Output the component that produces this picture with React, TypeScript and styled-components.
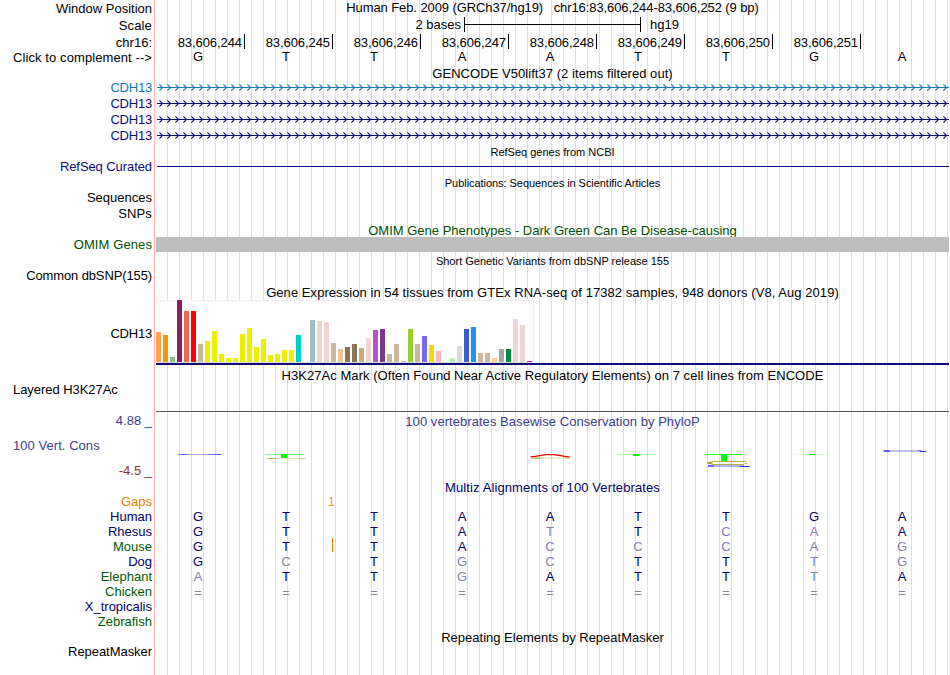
import styled, { createGlobalStyle } from "styled-components";

const BASES = ["G", "T", "T", "A", "A", "T", "T", "G", "A"];

const POSITIONS = [244, 245, 246, 247, 248, 249, 250, 251];

const GENES = [
  { id: 1, color: "#0c78b4" },
  { id: 2, color: "#0c0c78" },
  { id: 3, color: "#0c0c78" },
  { id: 4, color: "#0c0c78" },
];

const YELLOW = "#eeee00";
const TAN = "#cdb79e";
const PINK = "#eed5d2";

// [height, color] per tissue
const TISSUES: [number, string][] = [
  [30, "#ffa54f"],
  [27, "#ee9a00"],
  [5, "#8fbc8f"],
  [62, "#8b1c62"],
  [51, "#ee6a50"],
  [51, "#ff0000"],
  [18, TAN],
  [21, YELLOW],
  [31, YELLOW],
  [8, YELLOW],
  [4, YELLOW],
  [4, YELLOW],
  [28, YELLOW],
  [34, YELLOW],
  [15, YELLOW],
  [23, YELLOW],
  [7, YELLOW],
  [8, YELLOW],
  [12, YELLOW],
  [12, YELLOW],
  [27, "#00cdcd"],
  [0, "#ee82ee"],
  [42, "#9ac0cd"],
  [41, PINK],
  [40, PINK],
  [19, TAN],
  [13, "#eec591"],
  [15, "#8b7355"],
  [18, "#8b7355"],
  [14, "#cdaa7d"],
  [24, PINK],
  [32, "#b452cd"],
  [33, "#7a378b"],
  [8, TAN],
  [18, TAN],
  [1, TAN],
  [33, "#9acd32"],
  [18, TAN],
  [26, "#7a67ee"],
  [17, "#ffd700"],
  [11, "#ffb6c1"],
  [0, "#cd9b1d"],
  [4, "#b4eeb4"],
  [16, "#d9d9d9"],
  [33, "#3a5fcd"],
  [35, "#1e90ff"],
  [9, TAN],
  [9, TAN],
  [4, "#ffd39b"],
  [13, "#a6a6a6"],
  [13, "#008b45"],
  [43, PINK],
  [37, PINK],
  [1, "#ff00ff"],
];

const NAVY = "#000064";
const GREEN = "#005a00";

const SPECIES = [
  { name: "Human", color: NAVY, seq: "GTTAATTGA" },
  { name: "Rhesus", color: NAVY, seq: "GTTATTCAA" },
  { name: "Mouse", color: GREEN, seq: "GTTACCCAG", insert: true },
  { name: "Dog", color: NAVY, seq: "GCTGCTTTG" },
  { name: "Elephant", color: GREEN, seq: "ATTGATTTA" },
  { name: "Chicken", color: GREEN, seq: "=========" },
  { name: "X_tropicalis", color: NAVY, seq: "" },
  { name: "Zebrafish", color: GREEN, seq: "" },
];

const GeneLine = ({ id, color }: { id: number; color: string }) => (
  <TrackSvg width="794" height="16" viewBox="0 0 794 16">
    <defs>
      <pattern id={`strand${id}`} x="4" y="0" width="8" height="16" patternUnits="userSpaceOnUse">
        <path d="M0.4 4.4 L3.5 7.5 L0.4 10.6" fill="none" stroke={color} strokeWidth="1.15" />
      </pattern>
    </defs>
    <rect x="2" y="7" width="792" height="1" fill={color} />
    <rect x="3" y="0" width="791" height="16" fill={`url(#strand${id})`} />
  </TrackSvg>
);

const PhyloP = () => (
  <TrackSvg width="794" height="68" viewBox="155 412 794 68">
    <defs>
      <linearGradient id="blueFade">
        <stop offset="0" stopColor="#0000ff" stopOpacity="0.4" />
        <stop offset="0.12" stopColor="#0000ff" stopOpacity="0.75" />
        <stop offset="0.3" stopColor="#0000ff" stopOpacity="0.3" />
        <stop offset="0.55" stopColor="#0000ff" stopOpacity="0.3" />
        <stop offset="1" stopColor="#0000ff" stopOpacity="0.75" />
      </linearGradient>
      <linearGradient id="oliveFade">
        <stop offset="0" stopColor="#a09600" stopOpacity="0.5" />
        <stop offset="0.14" stopColor="#a09600" stopOpacity="0.8" />
        <stop offset="0.35" stopColor="#a09600" stopOpacity="0.25" />
        <stop offset="0.75" stopColor="#a09600" stopOpacity="0.25" />
        <stop offset="0.9" stopColor="#a09600" stopOpacity="0.6" />
        <stop offset="1" stopColor="#a09600" stopOpacity="0.2" />
      </linearGradient>
    </defs>

    <rect x="178" y="454" width="43" height="1" fill="url(#blueFade)" />

    <rect x="265" y="454" width="38" height="1" fill="#00ff00" opacity="0.5" />
    <rect x="281" y="454" width="6" height="4" fill="#00ff00" />
    <rect x="267" y="458" width="39" height="1" fill="url(#oliveFade)" />

    <path
      d="M530.5 456.8 L535 456.4 L546 454.6 L554 454.6 L565 456.4 L569.5 456.8"
      fill="none"
      stroke="#ff0000"
      strokeWidth="1.2"
    />
    <rect x="531" y="457.3" width="40" height="1.4" fill="url(#oliveFade)" />

    <rect x="617" y="454" width="38" height="1" fill="#00ff00" opacity="0.3" />
    <rect x="633" y="454" width="6" height="2" fill="#00ff00" />

    <rect x="705" y="454" width="38" height="1" fill="#00ff00" opacity="0.8" />
    <rect x="721" y="454" width="6" height="7" fill="#00ff00" />
    <path
      d="M746 461.7 L743 461.5 L713 461.5 L708 463 L713 464.5 L744 464.5 L745 463.3 L747 463.3"
      fill="none"
      stroke="#a09600"
      strokeWidth="1"
      opacity="0.75"
    />
    <rect x="707.5" y="462" width="5" height="2" fill="#a09600" opacity="0.7" />
    <rect x="708" y="465" width="36" height="2" fill="#0000ff" opacity="0.3" />
    <rect x="708" y="465" width="6" height="2" fill="#0000ff" opacity="0.4" />
    <rect x="740" y="466" width="10" height="1" fill="#0000ff" opacity="0.8" />

    <rect x="793" y="454" width="37" height="1" fill="#00ff00" opacity="0.15" />
    <rect x="809" y="454" width="6" height="1" fill="#00ff00" />

    <rect x="883" y="450" width="38" height="2" fill="#0000ff" opacity="0.25" />
    <rect x="884" y="450" width="6" height="2" fill="#0000ff" opacity="0.5" />
    <rect x="918" y="450" width="3" height="1" fill="#0000ff" opacity="0.4" />
    <rect x="920" y="451" width="6" height="1" fill="#0000ff" opacity="0.85" />
  </TrackSvg>
);

const App = () => {
  const human = SPECIES[0].seq;

  return (
    <>
      <GlobalStyle />
      <Browser>
        <Row $h={17}>
          <Label $top={1}>Window Position</Label>
          <Title $track={-0.09}>
            Human Feb. 2009 (GRCh37/hg19) &nbsp; chr16:83,606,244-83,606,252 (9 bp)
          </Title>
        </Row>
        <Row $h={17}>
          <Label $top={1} $track={0.15}>
            Scale
          </Label>
          <Scale>
            <ScaleText>2 bases</ScaleText>
            <ScaleBar />
            <span>hg19</span>
          </Scale>
        </Row>
        <Row $h={15}>
          <Label $top={1}>chr16:</Label>
          <Ruler>
            {POSITIONS.map((p) => (
              <Tick key={p}>83,606,{p}</Tick>
            ))}
          </Ruler>
        </Row>
        <Row $h={17}>
          <Label $top={1} $track={0.09}>
            Click to complement --&gt;
          </Label>
          <Sequence>
            {BASES.map((b, i) => (
              <Base key={i}>{b}</Base>
            ))}
          </Sequence>
        </Row>

        <Row $h={14}>
          <Label />
          <Title $track={0.05}>GENCODE V50lift37 (2 items filtered out)</Title>
        </Row>
        {GENES.map((g) => (
          <Row key={g.id} $h={16}>
            <Label $color={g.color} $track={-0.2}>
              CDH13
            </Label>
            <GeneLine id={g.id} color={g.color} />
          </Row>
        ))}

        <Row $h={15}>
          <Label />
          <Title $small>RefSeq genes from NCBI</Title>
        </Row>
        <Row $h={16}>
          <Label $color="#0c0c78" $track={-0.08}>
            RefSeq Curated
          </Label>
          <RefSeqLine />
        </Row>

        <Row $h={15}>
          <Label />
          <Title $small $track={-0.05}>
            Publications: Sequences in Scientific Articles
          </Title>
        </Row>
        <Row $h={16}>
          <Label>Sequences</Label>
        </Row>
        <Row $h={16}>
          <Label $track={0.15}>SNPs</Label>
        </Row>

        <Row $h={15}>
          <Label />
          <Title $top={1} $color="#005000">
            OMIM Gene Phenotypes - Dark Green Can Be Disease-causing
          </Title>
        </Row>
        <Row $h={16}>
          <Label $color="#005000" $track={0.1}>
            OMIM Genes
          </Label>
          <OmimBar />
        </Row>

        <Row $h={15}>
          <Label />
          <Title $small>Short Genetic Variants from dbSNP release 155</Title>
        </Row>
        <Row $h={16}>
          <Label $track={-0.12}>Common dbSNP(155)</Label>
        </Row>

        <Row $h={16}>
          <Label />
          <Title $top={1} $track={0.06}>
            Gene Expression in 54 tissues from GTEx RNA-seq of 17382 samples, 948 donors (V8, Aug 2019)
          </Title>
        </Row>
        <Row $h={65}>
          <Label $top={26} $track={-0.2}>
            CDH13
          </Label>
          <Gtex>
            <Bars>
              {TISSUES.map(([height, color], i) => (
                <Bar key={i} style={{ height, background: color }} />
              ))}
            </Bars>
          </Gtex>
        </Row>

        <Row $h={17}>
          <Label />
          <Title $top={3} $track={0.05}>
            H3K27Ac Mark (Often Found Near Active Regulatory Elements) on 7 cell lines from ENCODE
          </Title>
        </Row>
        <Row $h={30}>
          <Label $left $track={-0.05}>
            Layered H3K27Ac
          </Label>
          <H3kLine />
        </Row>

        <Row $h={68}>
          <ConsLabels>
            <Label $top={1} $color="#3c3c8c">
              4.88 _
            </Label>
            <Label $left $color="#3c3c8c" $track={0.05}>
              100 Vert. Cons
            </Label>
            <Label $color="#8c3232">-4.5 _</Label>
          </ConsLabels>
          <ConsTrack>
            <ConsTitle $top={2} $color="#3c3c8c" $track={0.05}>
              100 vertebrates Basewise Conservation by PhyloP
            </ConsTitle>
            <ConsPlot>
              <PhyloP />
            </ConsPlot>
          </ConsTrack>
        </Row>

        <Row $h={14}>
          <Label />
          <Title $color={NAVY} $track={0.11}>
            Multiz Alignments of 100 Vertebrates
          </Title>
        </Row>
        <Row $h={15}>
          <Label $color="#e68200">Gaps</Label>
          <GapCount>1</GapCount>
        </Row>
        {SPECIES.map((s) => (
          <Row key={s.name} $h={15}>
            <Label $color={s.color}>{s.name}</Label>
            <Sequence>
              {s.seq.split("").map((b, i) => (
                <Base key={i} $color={b === human[i] ? NAVY : "#8282af"} $drop={b === "="}>
                  {b}
                </Base>
              ))}
              {s.insert && <Insert />}
            </Sequence>
          </Row>
        ))}

        <Row $h={15}>
          <Label />
          <Title $top={1}>Repeating Elements by RepeatMasker</Title>
        </Row>
        <Row $h={31}>
          <Label $track={-0.05}>RepeatMasker</Label>
        </Row>
      </Browser>
    </>
  );
};

export default App;

const GlobalStyle = createGlobalStyle`
  body {
    margin: 0;
    background: #fff;
    overflow: hidden;
  }
`;

const Browser = styled.div`
  width: 950px;
  height: 675px;
  overflow: hidden;
  font-family: "Liberation Sans", Arial, sans-serif;
  font-size: 13px;
  line-height: 15px;
  color: #000;
  white-space: nowrap;
  background-image: linear-gradient(#ffb4b4, #ffb4b4),
    repeating-linear-gradient(to right, transparent 0 11px, #dcdcfa 11px 12px);
  background-size: 1px 100%, 794px 100%;
  background-position: 154px 0, 156px 0;
  background-repeat: no-repeat;
`;

const Row = styled.div<{ $h: number }>`
  display: flex;
  height: ${({ $h }) => $h}px;
`;

const Label = styled.div<{ $top?: number; $left?: boolean; $color?: string; $track?: number }>`
  box-sizing: border-box;
  flex: none;
  width: 155px;
  padding: ${({ $top }) => $top ?? 0}px 3px 0 13px;
  text-align: ${({ $left }) => ($left ? "left" : "right")};
  letter-spacing: ${({ $track }) => $track ?? 0}px;
  color: ${({ $color }) => $color ?? "#000"};
`;

const Title = styled.div<{ $top?: number; $small?: boolean; $color?: string; $track?: number }>`
  flex: 1;
  padding-top: ${({ $top }) => $top ?? 0}px;
  text-align: center;
  font-size: ${({ $small }) => ($small ? 11 : 13)}px;
  line-height: ${({ $small }) => ($small ? 17 : 15)}px;
  letter-spacing: ${({ $track }) => $track ?? 0}px;
  color: ${({ $color }) => $color ?? "#000"};
`;

const TrackSvg = styled.svg`
  display: block;
  flex: none;
`;

const Scale = styled.div`
  display: flex;
`;

const ScaleText = styled.div`
  width: 306px;
  padding-right: 3px;
  text-align: right;
`;

const ScaleBar = styled.div`
  box-sizing: border-box;
  width: 177px;
  height: 15px;
  margin-right: 9px;
  border: solid #000;
  border-width: 0 1px;
  background: linear-gradient(#000, #000) 0 7px / 100% 1px no-repeat;
`;

const Ruler = styled.div`
  display: flex;
  padding-left: 2px;
`;

const Tick = styled.div`
  box-sizing: border-box;
  width: 88px;
  height: 15px;
  padding: 1px 2px 0 0;
  border-right: 1px solid #000;
  text-align: right;
  letter-spacing: -0.08px;
`;

const Sequence = styled.div`
  position: relative;
  display: grid;
  grid-template-columns: repeat(9, 88px);
  margin-left: -1px;
`;

const Base = styled.span<{ $color?: string; $drop?: boolean }>`
  padding-top: ${({ $drop }) => ($drop ? 1 : 0)}px;
  text-align: center;
  color: ${({ $color }) => $color ?? "#000"};
`;

const Insert = styled.i`
  position: absolute;
  top: -1px;
  left: 178px;
  width: 1px;
  height: 14px;
  background: #e68200;
`;

const GapCount = styled.div`
  width: 180px;
  text-align: right;
  color: #eb9b3c;
`;

const RefSeqLine = styled.div`
  width: 792px;
  height: 1px;
  margin: 7px 0 0 2px;
  background: #0c0c78;
`;

const OmimBar = styled.div`
  z-index: 1;
  width: 793px;
  height: 15px;
  margin-left: 1px;
  background: #bebebe;
`;

const Gtex = styled.div`
  box-sizing: border-box;
  width: 793px;
  margin-left: 1px;
  border-bottom: 2px solid #0c0c78;
`;

const Bars = styled.div`
  box-sizing: border-box;
  display: flex;
  align-items: flex-end;
  gap: 2px;
  width: 378px;
  height: 63px;
  padding-bottom: 1px;
  background: #fff;
  box-shadow: inset 0 1px #f0f0f0, inset -1px 0 #f0f0f0, inset 0 -1px #dcdcdc;
`;

const Bar = styled.div`
  flex: none;
  width: 5px;
`;

const H3kLine = styled.div`
  width: 793px;
  height: 1px;
  margin: 29px 0 0 1px;
  background: #5a5a5a;
`;

const ConsLabels = styled.div`
  display: flex;
  flex-direction: column;
  justify-content: space-between;
  height: 66px;
`;

const ConsTrack = styled.div`
  flex: 1;
  display: grid;
`;

const ConsTitle = styled(Title)`
  grid-area: 1 / 1;
`;

const ConsPlot = styled.div`
  grid-area: 1 / 1;
`;
